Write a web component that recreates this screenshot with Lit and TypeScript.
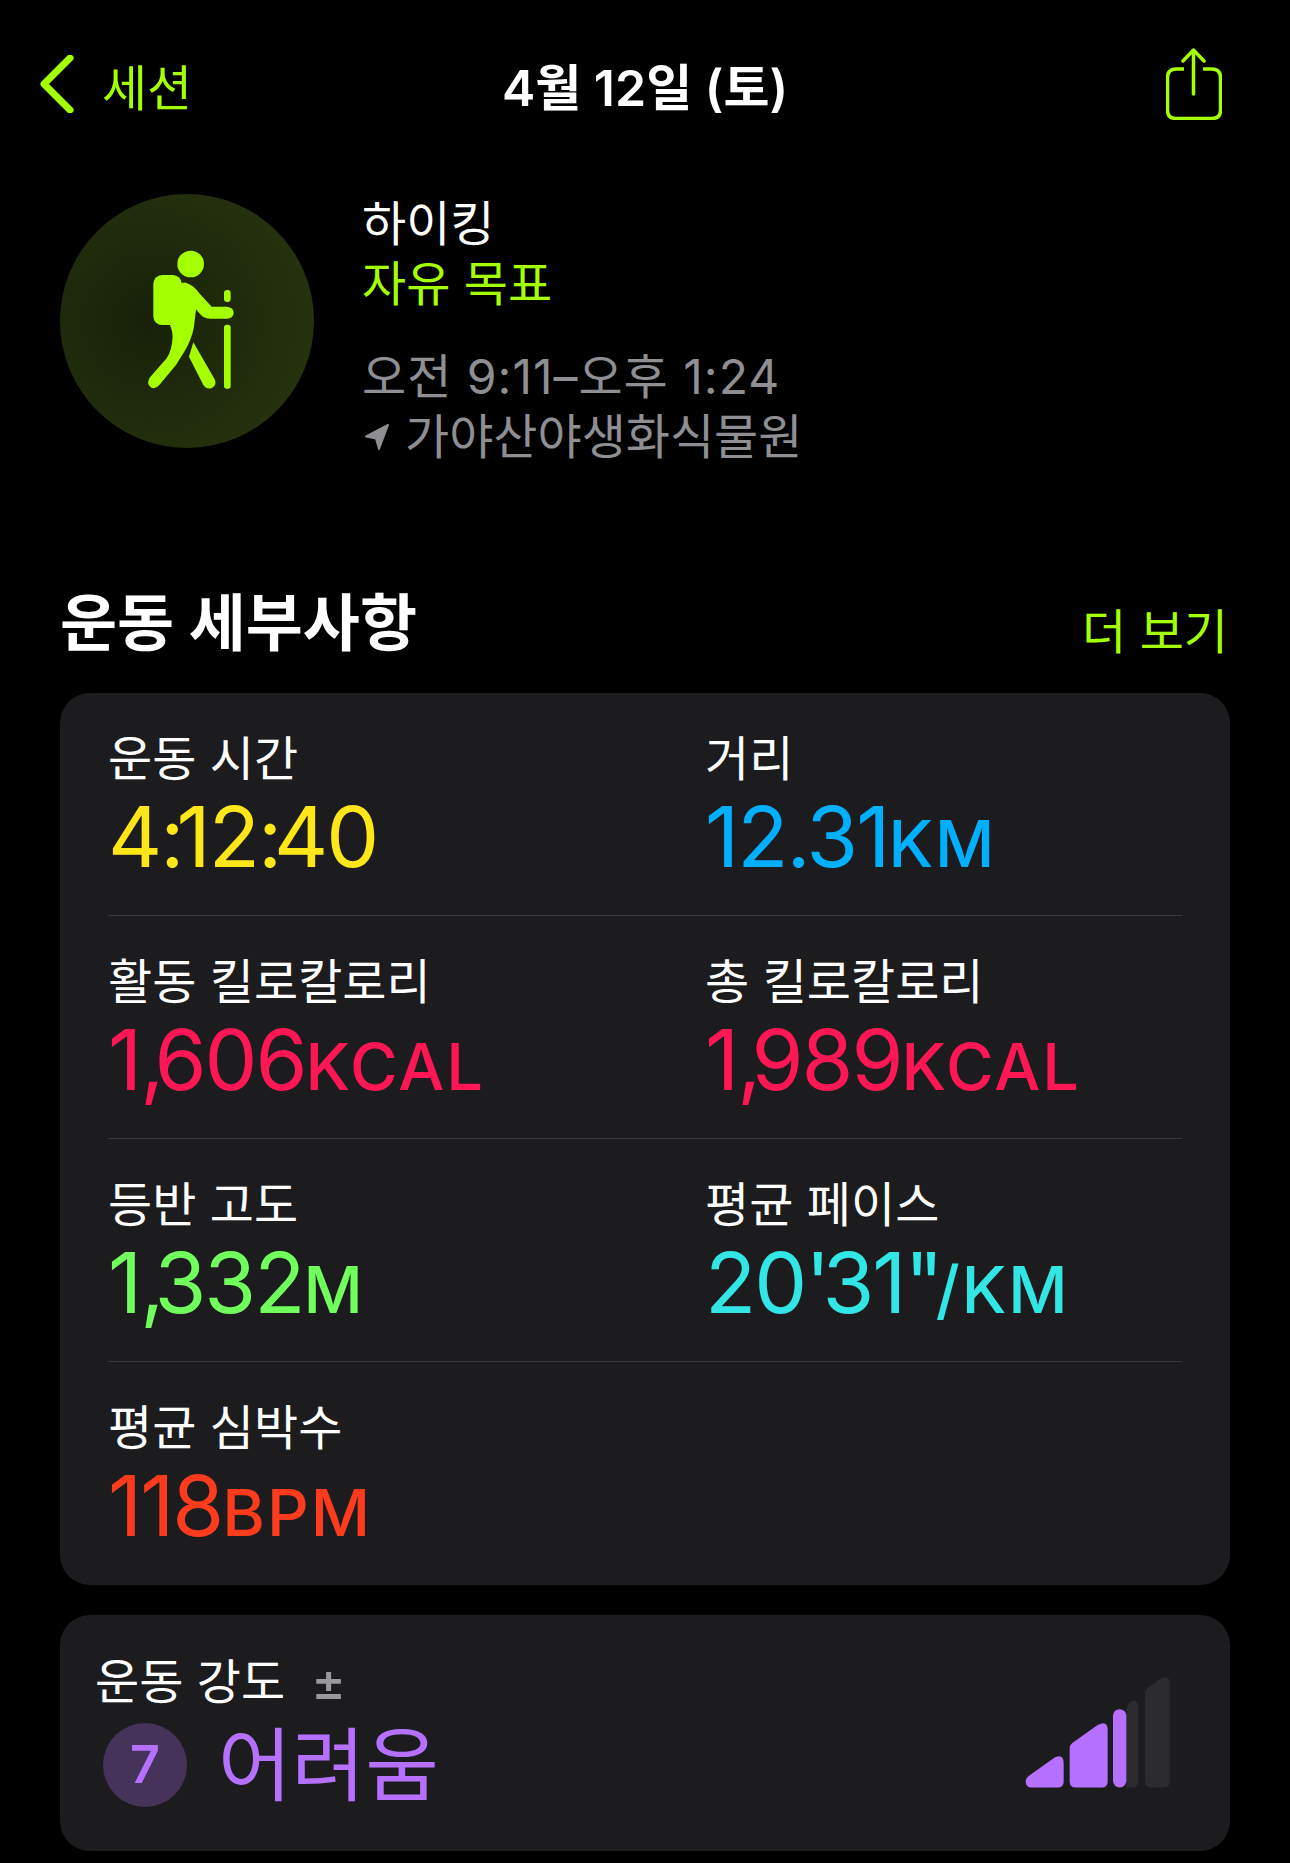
import { html, css, LitElement } from "lit";
import { customElement, property } from "lit/decorators.js";

@customElement("metric-cell")
export class MetricCell extends LitElement {
	static styles = css`
		:host {
			display: block;
		}
		.label {
			font-size: 48px;
			line-height: 56px;
			color: #fff;
		}
		.value {
			margin-top: 6px;
			font-size: 84px;
			line-height: 88px;
			letter-spacing: -2px;
			white-space: nowrap;
			color: var(--tint);
		}
		.comma {
			letter-spacing: -10px;
		}
		.tight {
			letter-spacing: -8px;
		}
		.unit {
			font-size: 65px;
			font-weight: 500;
			letter-spacing: 2px;
		}
	`;

	@property({ type: String }) label = "";
	@property({ type: String }) value = "";
	@property({ type: String }) unit = "";

	// SF digits sit closer round punctuation than Inter's do
	digits() {
		return this.value.split(/([,:'"])/).map((part) => {
			if (part === ",") return html`<span class="comma">,</span>`;
			if (/^[:'"]$/.test(part)) return html`<span class="tight">${part}</span>`;
			return part;
		});
	}

	render() {
		return html`
			<div class="label">${this.label}</div>
			<div class="value">${this.digits()}<span class="unit">${this.unit}</span></div>
		`;
	}
}

@customElement("app-root")
export class AppRoot extends LitElement {
	static styles = css`
		:host {
			display: block;
			height: 1863px;
			overflow: hidden;
			background: #000;
			color: #fff;
			font-family: Inter, "Noto Sans CJK KR", sans-serif;
		}
		.nav {
			display: grid;
			grid-template-columns: 1fr auto 1fr;
			align-items: center;
			height: 72px;
			padding: 48px 40px 0;
		}
		.back {
			display: flex;
			align-items: center;
			gap: 28px;
			color: #a4ff00;
			font-size: 49px;
		}
		.title {
			font-size: 50px;
			font-weight: 600;
		}
		.share {
			justify-self: end;
			display: block;
			margin-right: 28px;
		}
		.hero {
			display: flex;
			gap: 48px;
			padding: 74px 60px 0;
		}
		.disc {
			width: 254px;
			height: 254px;
			border-radius: 50%;
			flex: none;
			background: radial-gradient(circle at 35% 50%, #182108, #2a3710);
		}
		.disc svg {
			display: block;
		}
		.info {
			font-size: 48px;
			line-height: 60px;
		}
		.goal {
			color: #a4ff00;
		}
		.when {
			margin-top: 33px;
			color: #8e8e93;
			letter-spacing: 1px;
		}
		.place {
			display: flex;
			align-items: center;
			gap: 15px;
			color: #8e8e93;
		}
		.place svg {
			margin-left: 2px;
		}
		.section-head {
			display: flex;
			justify-content: space-between;
			align-items: center;
			padding: 121px 62px 0 60px;
		}
		h2 {
			margin: 0;
			font-size: 62px;
			line-height: 72px;
			font-weight: 700;
		}
		.more {
			margin-top: 15px;
			color: #a4ff00;
			font-size: 48px;
			line-height: 56px;
		}
		.card {
			margin: 33px 60px 0;
			border-radius: 30px;
			background: #1c1c1e;
		}
		.grid {
			display: grid;
			grid-template-columns: 597px 1fr;
			margin: 0 48px;
			padding-top: 38px;
			height: 223px;
			box-sizing: border-box;
			border-bottom: 1px solid #3a3a3c;
		}
		.grid:last-child {
			border-bottom: none;
		}
		.effort {
			margin-top: 30px;
			height: 236px;
			padding: 39px 57px 0 35px;
			box-sizing: border-box;
			display: flex;
			justify-content: space-between;
			align-items: flex-start;
		}
		.effort-label {
			display: flex;
			align-items: center;
			gap: 26px;
			font-size: 48px;
			line-height: 56px;
		}
		.plusminus {
			color: #98989d;
			font-size: 52px;
			font-weight: 500;
		}
		.effort-value {
			display: flex;
			align-items: center;
			gap: 31px;
			margin: 13px 0 0 8px;
			font-size: 80px;
			line-height: 84px;
			color: #b570ff;
		}
		.badge {
			width: 84px;
			height: 84px;
			border-radius: 50%;
			background: #463359;
			display: flex;
			align-items: center;
			justify-content: center;
			font-size: 52px;
			font-weight: 600;
		}
		.scale {
			display: block;
			margin-top: 19px;
		}
	`;

	rows = [
		[
			{ label: "운동 시간", value: "4:12:40", unit: "", tint: "#ffe619" },
			{ label: "거리", value: "12.31", unit: "KM", tint: "#00b0ff" },
		],
		[
			{ label: "활동 킬로칼로리", value: "1,606", unit: "KCAL", tint: "#ff1654" },
			{ label: "총 킬로칼로리", value: "1,989", unit: "KCAL", tint: "#ff1654" },
		],
		[
			{ label: "등반 고도", value: "1,332", unit: "M", tint: "#70ff5c" },
			{ label: "평균 페이스", value: "20'31\"", unit: "/KM", tint: "#33e6e6" },
		],
		[{ label: "평균 심박수", value: "118", unit: "BPM", tint: "#ff3b1d" }],
	];

	render() {
		return html`
			<div class="nav">
				<div class="back">
					<svg width="34" height="58" viewBox="0 0 34 58">
						<path d="M30 3 L4 29 L30 55" fill="none" stroke="#a4ff00" stroke-width="7" stroke-linecap="round" stroke-linejoin="round" />
					</svg>
					세션
				</div>
				<div class="title">4월 12일 (토)</div>
				<svg class="share" width="56" height="72" viewBox="1166 48 56 72">
					<path d="M1184 69 H1176 Q1167.500 69 1167.500 78 V110 Q1167.500 118.500 1176 118.500 H1212 Q1220.500 118.500 1220.500 110 V78 Q1220.500 69 1212 69 H1203" fill="none" stroke="#a4ff00" stroke-width="3.500" />
					<path d="M1193.500 94 V51 M1183 61 L1193.500 50 L1204 61" fill="none" stroke="#a4ff00" stroke-width="3.500" stroke-linecap="round" stroke-linejoin="round" />
				</svg>
			</div>

			<div class="hero">
				<div class="disc">
					<svg width="254" height="254" viewBox="60 42 762 762" fill="#a4ff00">
						<circle cx="452" cy="252" r="40" />
						<rect x="340" y="285" width="85" height="150" rx="26" />
						<path d="M415 308 H438 Q462 316 478 340 L515 380 H560 Q581 382 581 398 Q581 415 560 416 H510 Q490 416 478 400 L468 388 L462 440 Q455 480 430 520 L408 555 L358 615 Q345 630 332 622 Q318 610 330 592 L380 535 Q396 510 398 470 Q398 450 385 425 Z" />
						<path d="M460 487 L524 598 Q532 615 516 624 Q500 630 490 615 L447 530 Z" />
						<rect x="552" y="330" width="20" height="36" rx="9" />
						<rect x="552" y="434" width="20" height="192" rx="8" />
					</svg>
				</div>
				<div class="info">
					<div>하이킹</div>
					<div class="goal">자유 목표</div>
					<div class="when">오전 9:11–오후 1:24</div>
					<div class="place">
						<svg width="26" height="28" viewBox="0 0 26 28">
							<path d="M2 13.500 L24 2 L15 26 L12 15.500 Z" fill="#8e8e93" stroke="#8e8e93" stroke-width="2" stroke-linejoin="round" />
						</svg>
						가야산야생화식물원
					</div>
				</div>
			</div>

			<div class="section-head">
				<h2>운동 세부사항</h2>
				<div class="more">더 보기</div>
			</div>

			<div class="card">
				${this.rows.map(
					(row) => html`
						<div class="grid">
							${row.map(
								(m) => html`
									<metric-cell
										style="--tint: ${m.tint}"
										.label=${m.label}
										.value=${m.value}
										.unit=${m.unit}
									></metric-cell>
								`,
							)}
						</div>
					`,
				)}
			</div>

			<div class="card effort">
				<div>
					<div class="effort-label">운동 강도 <span class="plusminus">±</span></div>
					<div class="effort-value"><span class="badge">7</span>어려움</div>
				</div>
				<svg class="scale" width="150" height="117" viewBox="130 100 450 350">
					<path d="M138 425 Q138 415 148 408 L225 353 Q252 340 252 370 V425 Q252 443 234 443 H156 Q138 443 138 425 Z" fill="#b570ff" />
					<path d="M270 325 Q270 315 280 308 L355 255 Q384 240 384 270 V425 Q384 443 366 443 H288 Q270 443 270 425 Z" fill="#b570ff" />
					<path d="M440 215 Q445 182 462 182 Q476 182 476 200 V425 Q476 443 458 443 H440 Z" fill="#2c2c2e" />
					<path d="M496 160 Q496 150 506 143 L545 115 Q570 105 570 130 V425 Q570 443 552 443 H514 Q496 443 496 425 Z" fill="#2c2c2e" />
					<rect x="400" y="208" width="40" height="235" rx="20" fill="#b570ff" />
				</svg>
			</div>
		`;
	}
}
